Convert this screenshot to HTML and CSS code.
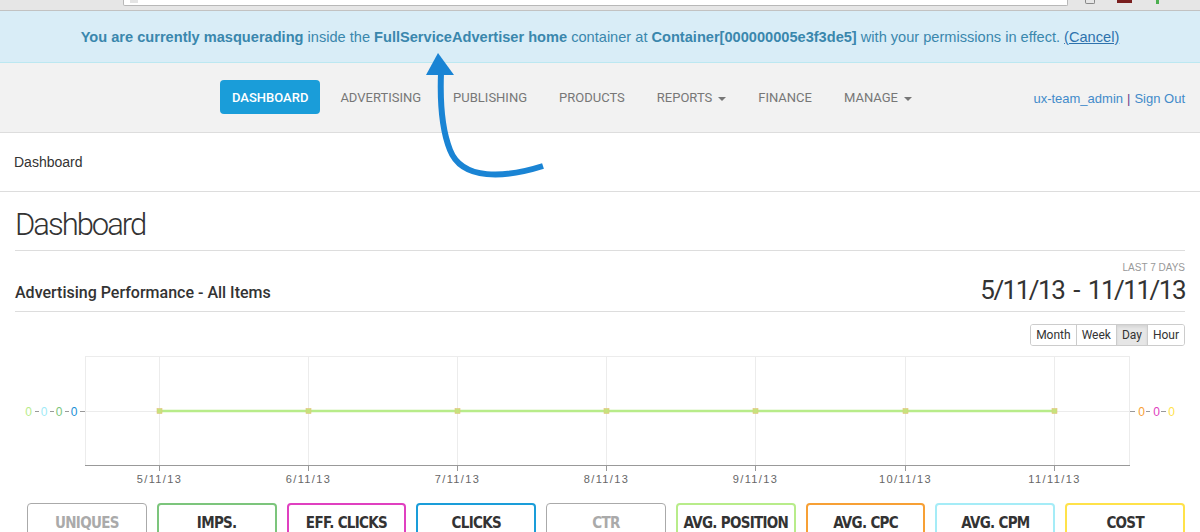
FILE: index.html
```html
<!DOCTYPE html>
<html lang="en">
<head>
    <meta charset="UTF-8">
    <meta name="viewport" content="width=device-width, initial-scale=1.0">
    <title>Dashboard</title>
    <link rel="stylesheet" href="styles.css">
</head>
<body>
    <div class="chrome">
        <div class="urlbar"><span class="url-icon"></span></div>
        <div class="chrome-icons">
            <span class="ci ci-grey"></span>
            <span class="ci ci-red"></span>
            <span class="ci ci-green"></span>
        </div>
    </div>

    <div class="masq-alert">
        <b>You are currently masquerading</b> inside the <b>FullServiceAdvertiser home</b> container at <b>Container[000000005e3f3de5]</b> with your permissions in effect. <a href="#">(Cancel)</a>
    </div>

    <nav class="navbar">
        <ul class="nav-links">
            <li><a class="active" href="#">Dashboard</a></li>
            <li><a href="#">Advertising</a></li>
            <li><a href="#">Publishing</a></li>
            <li><a href="#">Products</a></li>
            <li><a class="dropdown" href="#">Reports</a></li>
            <li><a href="#">Finance</a></li>
            <li><a class="dropdown" href="#">Manage</a></li>
        </ul>
        <div class="user-links">
            <a href="#">ux-team_admin</a><span class="sep">|</span><a href="#">Sign Out</a>
        </div>
    </nav>

    <div class="breadcrumb">Dashboard</div>

    <div class="page">
        <h1 class="page-title">Dashboard</h1>

        <div class="panel-head">
            <h2>Advertising Performance - All Items</h2>
            <div class="range">
                <span class="range-label">Last 7 days</span>
                <span class="range-dates">5/11/13 - 11/11/13</span>
            </div>
        </div>

        <div class="chart-tools">
            <div class="btn-group">
                <button>Month</button>
                <button>Week</button>
                <button class="on">Day</button>
                <button>Hour</button>
            </div>
        </div>

        <svg class="chart" width="1170" height="140" viewBox="0 0 1170 140">
            <rect x="70.5" y="6.5" width="1044" height="109" fill="none" stroke="#ececec"/>
            <line x1="70" y1="61.5" x2="1115" y2="61.5" stroke="#ececec"/>
            <g stroke="#ececec">
                <line x1="144.5" y1="6" x2="144.5" y2="115"/>
                <line x1="293.5" y1="6" x2="293.5" y2="115"/>
                <line x1="442.5" y1="6" x2="442.5" y2="115"/>
                <line x1="591.5" y1="6" x2="591.5" y2="115"/>
                <line x1="740.5" y1="6" x2="740.5" y2="115"/>
                <line x1="890.5" y1="6" x2="890.5" y2="115"/>
                <line x1="1039.5" y1="6" x2="1039.5" y2="115"/>
            </g>
            <line x1="70" y1="115.5" x2="1115" y2="115.5" stroke="#999"/>
            <g stroke="#999">
                <line x1="144.5" y1="115" x2="144.5" y2="121"/>
                <line x1="293.5" y1="115" x2="293.5" y2="121"/>
                <line x1="442.5" y1="115" x2="442.5" y2="121"/>
                <line x1="591.5" y1="115" x2="591.5" y2="121"/>
                <line x1="740.5" y1="115" x2="740.5" y2="121"/>
                <line x1="890.5" y1="115" x2="890.5" y2="121"/>
                <line x1="1039.5" y1="115" x2="1039.5" y2="121"/>
                <line x1="20" y1="61.5" x2="24" y2="61.5"/>
                <line x1="35" y1="61.5" x2="39" y2="61.5"/>
                <line x1="50" y1="61.5" x2="54" y2="61.5"/>
                <line x1="65" y1="61.5" x2="70" y2="61.5"/>
                <line x1="1115" y1="61.5" x2="1120" y2="61.5"/>
                <line x1="1131" y1="61.5" x2="1135" y2="61.5"/>
                <line x1="1146" y1="61.5" x2="1151" y2="61.5"/>
            </g>
            <g class="tick-labels" text-anchor="middle">
                <text x="144.5" y="133">5/11/13</text>
                <text x="293.5" y="133">6/11/13</text>
                <text x="442.5" y="133">7/11/13</text>
                <text x="591.5" y="133">8/11/13</text>
                <text x="740.5" y="133">9/11/13</text>
                <text x="890.5" y="133">10/11/13</text>
                <text x="1039.5" y="133">11/11/13</text>
            </g>
            <g class="axis-labels" text-anchor="middle">
                <text x="13.5" y="65.5" fill="#b8ec8a">0</text>
                <text x="29" y="65.5" fill="#9feaf7">0</text>
                <text x="44" y="65.5" fill="#7cc57c">0</text>
                <text x="59" y="65.5" fill="#1a8fd6">0</text>
                <text x="1126.5" y="65.5" fill="#f7a035">0</text>
                <text x="1141.5" y="65.5" fill="#e040c0">0</text>
                <text x="1156.5" y="65.5" fill="#ffe24a">0</text>
            </g>
            <line x1="144.5" y1="61" x2="1039.5" y2="61" stroke="#b8ec8a" stroke-width="2.5"/>
            <g fill="#c6e37c" stroke="#e5c27c" stroke-width="0.6">
                <rect x="142" y="58.5" width="5" height="5"/>
                <rect x="291" y="58.5" width="5" height="5"/>
                <rect x="440" y="58.5" width="5" height="5"/>
                <rect x="589" y="58.5" width="5" height="5"/>
                <rect x="738" y="58.5" width="5" height="5"/>
                <rect x="888" y="58.5" width="5" height="5"/>
                <rect x="1037" y="58.5" width="5" height="5"/>
            </g>
        </svg>

        <div class="metrics">
            <button class="metric off">Uniques</button>
            <button class="metric m-imps">Imps.</button>
            <button class="metric m-eff">Eff. Clicks</button>
            <button class="metric m-clicks">Clicks</button>
            <button class="metric off">CTR</button>
            <button class="metric m-pos">Avg. Position</button>
            <button class="metric m-cpc">Avg. CPC</button>
            <button class="metric m-cpm">Avg. CPM</button>
            <button class="metric m-cost">Cost</button>
        </div>
    </div>

    <!-- callout arrow pointing at the masquerade notice -->
    <svg class="callout-arrow" width="1200" height="200" viewBox="0 0 1200 200">
        <path d="M543,166 C505,178 462,181 450,150 C442,130 440,100 441,73" fill="none" stroke="#1a84d4" stroke-width="6"/>
        <polygon points="438,53 426,75 454,75" fill="#1a84d4"/>
    </svg>
</body>
</html>
```

FILE: styles.css
```css
html, body {
    overflow: hidden;
}

body {
    margin: 0;
    font-family: "Liberation Sans", Arial, sans-serif;
    font-size: 14px;
    color: #333;
    background: #fff;
    position: relative;
}

/* browser chrome sliver at the top */
.chrome {
    height: 10px;
    background: #e6e6e6;
    border-bottom: 1px solid #c2c2c2;
    display: flex;
    align-items: flex-start;
}

.urlbar {
    margin-left: 123px;
    width: 943px;
    height: 5px;
    background: #fff;
    border: 1px solid #b8b8b8;
    border-top: none;
    border-radius: 0 0 2px 2px;
}

.url-icon {
    display: block;
    width: 8px;
    height: 3px;
    margin-left: 6px;
    background: #e4e4e4;
}

.chrome-icons {
    display: flex;
    gap: 18px;
    margin-left: 17px;
}

.ci {
    display: block;
    height: 4px;
}

.ci-grey {
    width: 8px;
    border: 1px solid #888;
    border-top: none;
    height: 3px;
    border-radius: 0 0 2px 2px;
}

.ci-red {
    width: 15px;
    background: #7a1f1f;
    height: 3px;
    margin-left: 4px;
}

.ci-green {
    width: 3px;
    background: #4caf50;
    margin-left: 6px;
}

/* masquerade notice */
.masq-alert {
    height: 50px;
    padding-top: 1px;
    line-height: 50px;
    background: #d9edf7;
    border-bottom: 1px solid #bce8f1;
    color: #3a87ad;
    text-align: center;
    font-size: 14.6px;
}

.masq-alert a {
    color: #2d72ad;
}

/* main nav */
.navbar {
    height: 69px;
    background: #f2f2f2;
    border-bottom: 1px solid #ddd;
    display: flex;
    justify-content: space-between;
    align-items: flex-start;
    padding: 0 15px 0 220px;
}

.nav-links {
    list-style: none;
    margin: 17px 0 0;
    padding: 0;
    display: flex;
    gap: 8px;
}

.nav-links a {
    display: block;
    height: 34px;
    line-height: 35px;
    padding: 0 12px;
    border-radius: 4px;
    font-family: Roboto, sans-serif;
    font-size: 13px;
    text-transform: uppercase;
    color: #777;
    text-decoration: none;
}

.nav-links a.active {
    background: #1a9dd9;
    color: #fff;
    font-weight: 500;
}

.nav-links a.dropdown::after {
    content: "";
    display: inline-block;
    margin-left: 6px;
    vertical-align: middle;
    border-top: 4px solid #777;
    border-left: 4px solid transparent;
    border-right: 4px solid transparent;
}

.user-links {
    margin-top: 27px;
    font-size: 13px;
    line-height: 18px;
}

.user-links a {
    color: #428bca;
    text-decoration: none;
}

.user-links .sep {
    color: #6b3a8c;
    margin: 0 4px;
}

/* breadcrumb */
.breadcrumb {
    height: 58px;
    line-height: 58px;
    padding-left: 14px;
    border-bottom: 1px solid #ddd;
    font-size: 14px;
    color: #333;
}

.page {
    padding: 0 15px;
}

.page-title {
    margin: 0;
    padding: 15px 0 7px;
    line-height: 36px;
    font-family: Roboto, sans-serif;
    font-size: 31px;
    font-weight: 300;
    letter-spacing: -2px;
    color: #333;
    border-bottom: 1px solid #ddd;
}

.panel-head {
    display: flex;
    justify-content: space-between;
    align-items: flex-end;
    padding: 11px 0 5px;
    border-bottom: 1px solid #ddd;
}

.panel-head h2 {
    margin: 0 0 3px;
    font-family: Roboto, sans-serif;
    font-size: 16px;
    font-weight: 500;
    line-height: 20px;
    color: #333;
}

.range {
    display: flex;
    flex-direction: column;
    align-items: flex-end;
}

.range-label {
    font-size: 10px;
    line-height: 12px;
    text-transform: uppercase;
    color: #999;
}

.range-dates {
    font-family: Roboto, sans-serif;
    font-size: 26px;
    line-height: 32px;
    letter-spacing: -1.5px;
    word-spacing: 4px;
    color: #333;
}

.chart-tools {
    display: flex;
    justify-content: flex-end;
    padding-top: 12px;
}

.btn-group {
    display: flex;
    border: 1px solid #ccc;
    border-radius: 3px;
    overflow: hidden;
}

.btn-group button {
    height: 20px;
    padding: 0 5px;
    border: none;
    border-left: 1px solid #ccc;
    background: #fff;
    font-family: Roboto, sans-serif;
    font-size: 12px;
    color: #333;
}

.btn-group button:first-child {
    border-left: none;
}

.btn-group button.on {
    background: #e6e6e6;
    box-shadow: inset 0 2px 3px rgba(0, 0, 0, 0.08);
}

.chart {
    display: block;
    margin-top: 4px;
}

.tick-labels text {
    font-family: "Liberation Sans", Arial, sans-serif;
    font-size: 11px;
    letter-spacing: 1.4px;
    fill: #666;
}

.axis-labels text {
    font-family: "Liberation Sans", Arial, sans-serif;
    font-size: 12px;
}

.metrics {
    display: flex;
    gap: 10px;
    margin-top: 13px;
    padding-left: 12px;
}

.metric {
    width: 120px;
    height: 40px;
    padding: 0;
    background: #fff;
    border: 2px solid #aaa;
    border-radius: 4px;
    font-family: "DejaVu Sans Condensed", Roboto, sans-serif;
    font-size: 15px;
    font-weight: bold;
    letter-spacing: -0.7px;
    text-transform: uppercase;
    color: #333;
    vertical-align: top;
}

.metric.off {
    border-width: 1px;
    color: #aaa;
}

.m-imps { border-color: #7cc57c; }
.m-eff { border-color: #e040c0; }
.m-clicks { border-color: #1a9dd9; }
.m-pos { border-color: #b8ec8a; }
.m-cpc { border-color: #f7a035; }
.m-cpm { border-color: #a5ecf7; }
.m-cost { border-color: #ffe24a; }

.callout-arrow {
    position: absolute;
    top: 0;
    left: 0;
    pointer-events: none;
}
```
